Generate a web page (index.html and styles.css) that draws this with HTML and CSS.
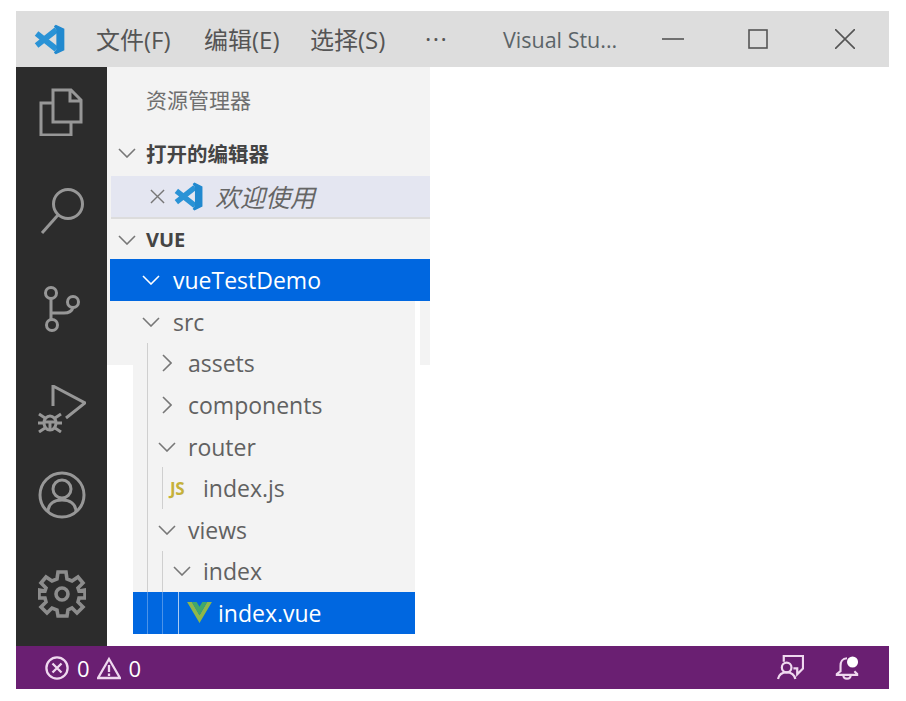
FILE: index.html
```html
<!DOCTYPE html>
<html lang="zh-CN">
<head>
<meta charset="utf-8">
<title>Visual Studio Code</title>
<link rel="stylesheet" href="styles.css">
</head>
<body>
<svg class="defs" width="0" height="0" aria-hidden="true">
  <symbol id="logo" viewBox="0 0 24 24">
    <path fill="none" stroke="#2a93d6" stroke-width="4.2" d="M2.6 7.6 17 19M2.6 16.4 17 5"/>
    <path fill="#2189cf" d="M16.6 1.2 22.8 4.2V19.8L16.6 22.8 15.2 21.6 17 19V5L15.2 2.4Z"/>
  </symbol>
  <symbol id="down" viewBox="0 0 18 10"><path d="M1 1 9 9 17 1" fill="none" stroke="currentColor" stroke-width="1.6"/></symbol>
  <symbol id="right" viewBox="0 0 10 18"><path d="M1 1 9 9 1 17" fill="none" stroke="currentColor" stroke-width="1.6"/></symbol>
</svg>
<div class="window">
  <header class="titlebar">
    <svg class="logo"><use href="#logo"/></svg>
    <span class="menu m1">文件(F)</span>
    <span class="menu m2">编辑(E)</span>
    <span class="menu m3">选择(S)</span>
    <span class="menu m4">···</span>
    <span class="wintitle">Visual Stu...</span>
    <svg class="winbtn min" viewBox="0 0 22 20"><path d="M0 10H22" stroke="#555" stroke-width="1.6"/></svg>
    <svg class="winbtn max" viewBox="0 0 20 20"><rect x="1" y="1" width="18" height="18" fill="none" stroke="#555" stroke-width="1.6"/></svg>
    <svg class="winbtn close" viewBox="0 0 20 20"><path d="M0 0 20 20M20 0 0 20" stroke="#555" stroke-width="1.6"/></svg>
  </header>
  <div class="main">
    <nav class="activity">
      <div class="act-group">
        <svg class="act" viewBox="0 0 48 48"><path d="M15 2H33L43 12V34H15ZM32 2V13H43M15 15H3V47H33V34"/></svg>
        <svg class="act" viewBox="0 0 48 48"><circle cx="30" cy="17" r="14.5"/><path d="M20 28 4 46"/></svg>
        <svg class="act" viewBox="0 0 48 48"><circle cx="13" cy="7" r="5.5"/><circle cx="35" cy="16" r="5.5"/><circle cx="14" cy="39" r="5.5"/><path d="M13 13V33M14 27H26C31 27 34 25 35 21.5"/></svg>
        <svg class="act" viewBox="0 0 48 48"><path d="M15 21V1L47 18 28 33"/><ellipse cx="12" cy="38" rx="6" ry="7"/><path d="M1 29 7 33M23 29 17 33M0 38H6M18 38H24M1 47 7 43M23 47 17 43M6 37H18M12 37V45"/></svg>
      </div>
      <div class="act-group lower">
        <svg class="act" viewBox="0 0 48 48"><circle cx="24" cy="24" r="22"/><circle cx="24" cy="18" r="9"/><path d="M10 41C10 33 16 29 24 29 32 29 38 33 38 41"/></svg>
        <svg class="act gear" viewBox="0 0 48 48"><circle cx="24" cy="24" r="6"/><path d="M20 2H28L29 9 34 11 40 7 45 13 40 18 41 21 47 20V28L41 28 40 32 45 37 39 43 34 38 30 40 29 46H20L19 40 14 38 9 43 3 37 8 32 7 28 1 28V20L7 21 8 18 3 13 8 7 14 11 19 9Z"/></svg>
      </div>
    </nav>
    <div class="stage">
      <div class="side-bg"></div>
      <div class="explorer">
        <div class="view-title">资源管理器</div>
        <div class="section open-head"><svg class="chev"><use href="#down"/></svg><span>打开的编辑器</span></div>
        <div class="welcome">
          <svg class="wclose" viewBox="0 0 16 16"><path d="M1 1 15 15M15 1 1 15" stroke="#777" stroke-width="1.5"/></svg>
          <svg class="wlogo"><use href="#logo"/></svg>
          <em>欢迎使用</em>
        </div>
        <div class="section vue-head"><svg class="chev"><use href="#down"/></svg><span>VUE</span></div>
        <div class="root-row"><svg class="chev"><use href="#down"/></svg><span>vueTestDemo</span></div>
        <div class="tree">
          <div class="row lv0"><svg class="chev"><use href="#down"/></svg><span>src</span></div>
          <div class="row lv1 g1"><svg class="chev-r"><use href="#right"/></svg><span>assets</span></div>
          <div class="row lv1 g1"><svg class="chev-r"><use href="#right"/></svg><span>components</span></div>
          <div class="row lv1 g1"><svg class="chev"><use href="#down"/></svg><span>router</span></div>
          <div class="row lv2 g2"><b class="js">JS</b><span>index.js</span></div>
          <div class="row lv1 g1"><svg class="chev"><use href="#down"/></svg><span>views</span></div>
          <div class="row lv2 g2"><svg class="chev"><use href="#down"/></svg><span>index</span></div>
          <div class="row lv3 selected">
            <svg class="vue" viewBox="0 0 26 22"><path fill="#8fb84a" d="M0 0H5L13 14 21 0H26L13 22Z"/><path fill="#41a86a" d="M5 0H10L13 5 16 0H21L13 14Z"/></svg>
            <span>index.vue</span>
          </div>
        </div>
      </div>
    </div>
  </div>
  <footer class="status">
    <svg class="st-icon" viewBox="0 0 24 24"><circle cx="12" cy="12" r="10.6"/><path d="M7.5 7.5 16.5 16.5M16.5 7.5 7.5 16.5"/></svg>
    <span class="st-num">0</span>
    <svg class="st-icon warn" viewBox="0 0 24 22"><path d="M12 2 23 21H1ZM12 8V15M12 16.5V19"/></svg>
    <span class="st-num">0</span>
    <span class="st-fill"></span>
    <svg class="st-icon feedback" viewBox="0 0 28 26"><path d="M7 7V1H27V14L21 20V14H17"/><circle cx="10" cy="13" r="5"/><path d="M1 25C2 20 5 18 10 18 15 18 18 20 19 25"/></svg>
    <svg class="st-icon bell" viewBox="0 0 26 26"><path d="M13 3C8 3 6 7 6 11V17L2 20V21H24V20L21 17M9 21C9 24 11 25 13 25 15 25 17 24 17 21"/><circle class="dot" cx="19" cy="7" r="6"/></svg>
  </footer>
</div>
</body>
</html>
```
FILE: styles.css
```css
* { box-sizing: border-box; }
html, body { margin: 0; padding: 0; background: #fff; }
body {
  width: 906px;
  height: 701px;
  padding: 11px 17px 12px 16px;
  font-family: "Open Sans", "Noto Sans CJK SC", sans-serif;
  overflow: hidden;
}
.defs { position: absolute; }
.window { height: 678px; display: flex; flex-direction: column; }

/* title bar */
.titlebar {
  height: 56px;
  flex: none;
  background: #dddddd;
  display: flex;
  align-items: center;
  color: #555;
}
.logo { width: 33px; height: 33px; margin-left: 17px; flex: none; }
.menu { font-size: 24px; white-space: nowrap; flex: none; padding-bottom: 2px; }
.m1 { margin-left: 30px; width: 108px; }
.m2 { width: 106px; }
.m3 { width: 115px; }
.m4 { width: 78px; letter-spacing: 1.5px; }
.wintitle { font-size: 21.5px; width: 159px; flex: none; white-space: nowrap; color: #5b6468; }
.winbtn { flex: none; }
.min { width: 22px; height: 20px; }
.max { width: 20px; height: 20px; margin-left: 64px; }
.close { width: 20px; height: 20px; margin-left: 67px; }

/* main */
.main { flex: 1; display: flex; min-height: 0; }
.activity {
  width: 91px;
  flex: none;
  background: #2c2c2c;
  padding-top: 21px;
  display: flex;
  flex-direction: column;
  align-items: center;
}
.act-group { display: flex; flex-direction: column; gap: 51px; }
.act-group.lower { margin-top: 38px; }
.act {
  width: 48px;
  height: 48px;
  display: block;
  fill: none;
  stroke: #979797;
  stroke-width: 3;
}
.gear { stroke-width: 3.6; stroke: #8c8c8c; }

.stage { flex: 1; display: grid; align-items: start; justify-items: start; }
.side-bg, .explorer { grid-area: 1 / 1; }
.side-bg { width: 323px; height: 298px; background: #f3f3f3; }
.explorer { width: 323px; color: #616161; }

.view-title {
  height: 66px;
  padding-left: 39px;
  padding-bottom: 2px;
  display: flex;
  align-items: center;
  font-size: 21px;
  color: #6f6f6f;
}
.section {
  display: flex;
  align-items: center;
  padding-left: 11px;
  font-size: 20.5px;
  font-weight: 700;
  color: #444;
}
.section .chev { margin-right: 10px; }
.open-head { height: 43px; padding-bottom: 4px; }
.vue-head { height: 40px; font-size: 20px; padding-top: 1px; }
.chev { width: 18px; height: 10px; flex: none; color: #777; }
.chev-r { width: 10px; height: 18px; flex: none; color: #777; }

.welcome {
  margin-left: 4px;
  height: 43px;
  background: #e4e6f1;
  border-bottom: 2px solid #dcdcdc;
  display: flex;
  align-items: center;
  padding-left: 39px;
}
.wclose { width: 15px; height: 15px; flex: none; }
.wlogo { width: 31px; height: 31px; margin-left: 8px; flex: none; }
.welcome em { margin-left: 11px; font-size: 25px; color: #666; padding-bottom: 2px; }

.root-row {
  margin-left: 3px;
  height: 42px;
  background: #0067e0;
  color: #fff;
  display: flex;
  align-items: center;
  padding-left: 32px;
  font-size: 23px;
}
.root-row .chev { color: #fff; margin-right: 13px; }

.tree {
  margin-left: 26px;
  width: 287px;
  background: #f3f3f3;
  border-right: 5px solid #fff;
}
.row {
  height: 41.6px;
  display: flex;
  align-items: center;
  font-size: 23px;
  white-space: nowrap;
  background-repeat: no-repeat;
}
.lv0 { padding-left: 9px; }
.lv0 .chev { margin-right: 13px; }
.lv1 { padding-left: 25px; }
.lv1 .chev { margin-right: 12px; }
.lv1 .chev-r { margin-left: 4px; margin-right: 16px; }
.lv2 { padding-left: 37px; }
.lv2 .chev { margin-left: 3px; margin-right: 12px; }
.lv3 { padding-left: 54px; }
.g1 { background-image: linear-gradient(#cfcfcf, #cfcfcf); background-size: 1px 100%; background-position: 14px 0; }
.g2 {
  background-image: linear-gradient(#cfcfcf, #cfcfcf), linear-gradient(#cfcfcf, #cfcfcf);
  background-size: 1px 100%, 1px 100%;
  background-position: 14px 0, 29px 0;
}
.selected {
  color: #fff;
  background-color: #0067e0;
  background-image: linear-gradient(#4c93e8, #4c93e8), linear-gradient(#4c93e8, #4c93e8), linear-gradient(#a9cbf3, #a9cbf3);
  background-size: 1px 100%, 1px 100%, 1px 100%;
  background-position: 14px 0, 29px 0, 45px 0;
}
.js { font-size: 17px; color: #c5b13a; width: 20px; margin-right: 13px; flex: none; letter-spacing: -0.5px; }
.vue { width: 25px; height: 21px; flex: none; margin-right: 6px; }

/* status bar */
.status {
  height: 43px;
  flex: none;
  background: #6a1f72;
  color: #fff;
  display: flex;
  align-items: center;
  padding-left: 29px;
  font-size: 22px;
}
.st-icon {
  flex: none;
  fill: none;
  stroke: #efd8ef;
  stroke-width: 2.3;
  width: 24px;
  height: 24px;
}
.st-num { margin-left: 8px; }
.warn { width: 24px; margin-left: 7px; }
.st-fill { flex: 1; }
.feedback { width: 27px; height: 25px; }
.bell { width: 24px; height: 25px; margin-left: 31px; margin-right: 30px; }
.dot { fill: #fff; stroke: none; }
```
